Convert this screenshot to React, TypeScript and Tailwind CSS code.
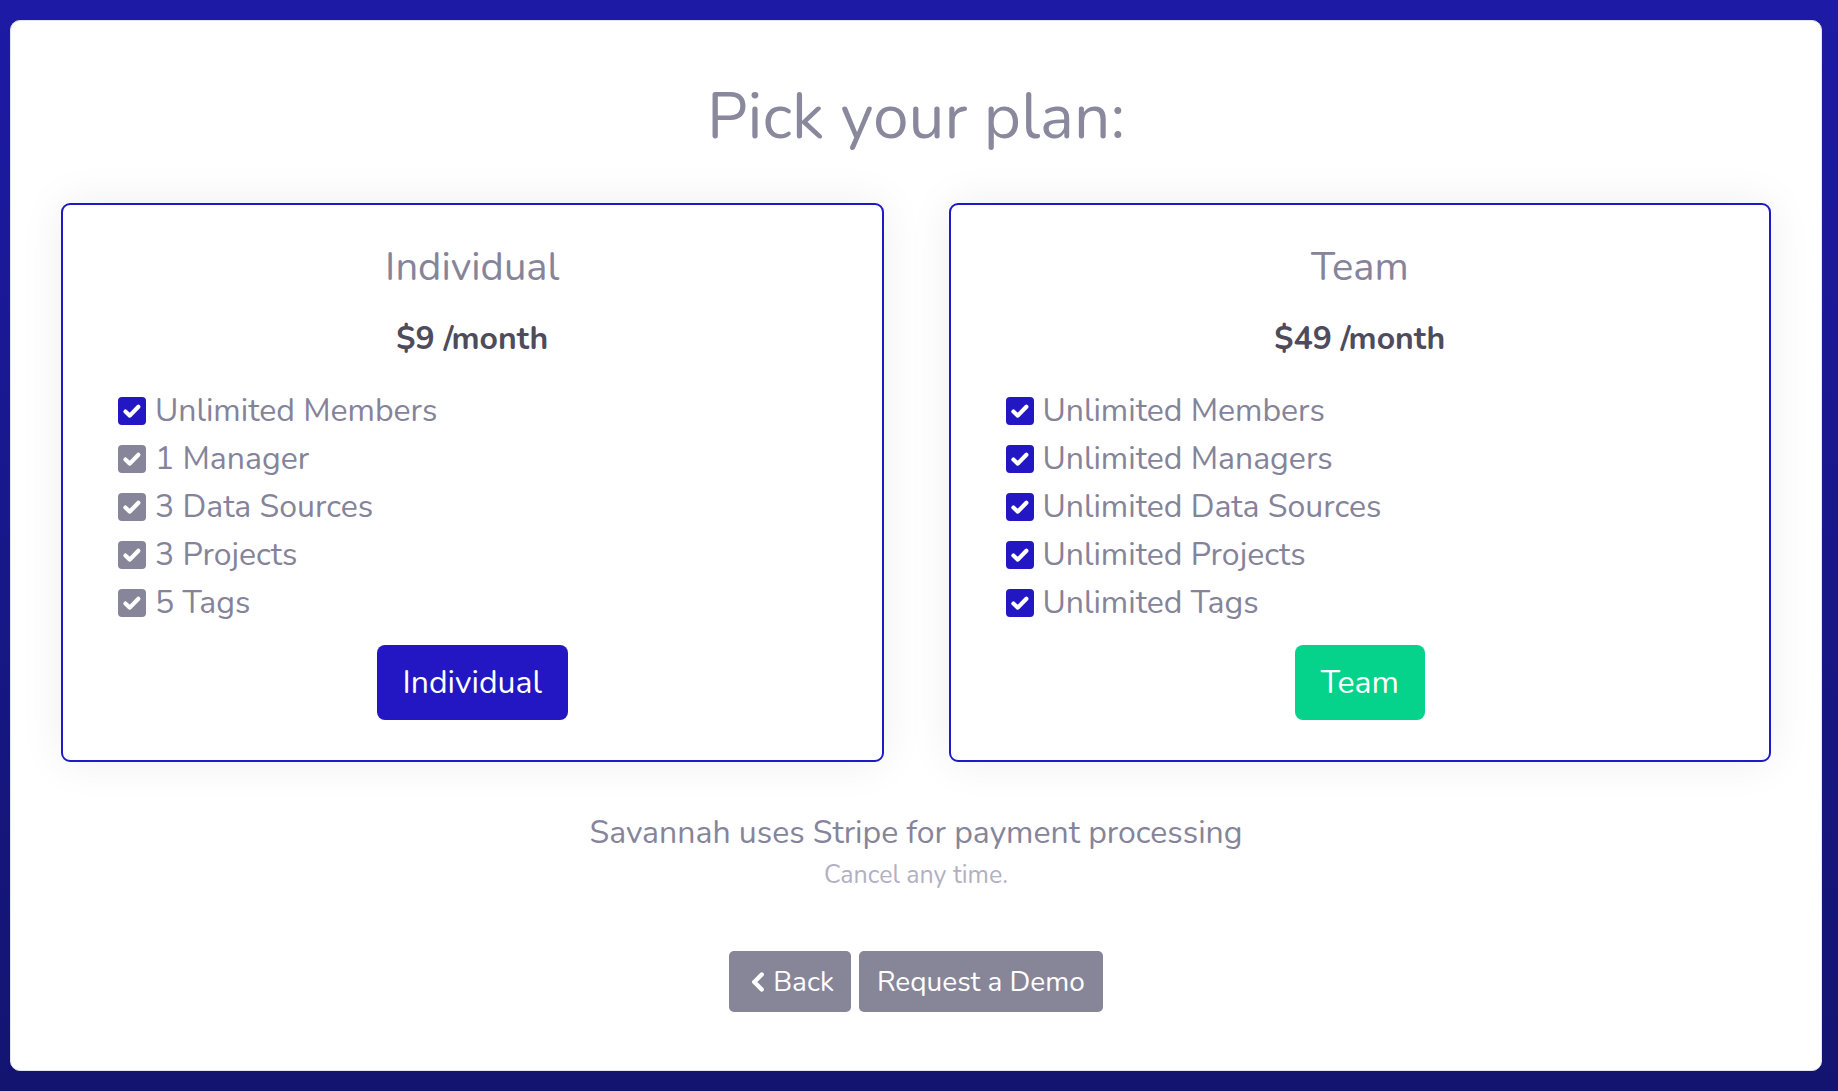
import React from "react";
import { ChevronLeft } from "lucide-react";

const font = { fontFamily: "Nunito, Lato, 'Open Sans', sans-serif" };

function Check({ color }: { color: "blue" | "gray" }) {
  return (
    <span
      className={
        "flex h-[28px] w-[28px] shrink-0 items-center justify-center rounded-[4px] " +
        (color === "blue" ? "bg-[#2317c3]" : "bg-[#878599]")
      }
    >
      <svg width="22" height="22" viewBox="0 0 20 20" fill="none">
        <path d="M4 10.5 L8 14.2 L15.8 6.2" stroke="white" strokeWidth="3.8" strokeLinecap="round" strokeLinejoin="round" />
      </svg>
    </span>
  );
}

type Feature = { text: string; color: "blue" | "gray" };

function PlanCard({
  title,
  price,
  features,
  button,
  buttonClass,
}: {
  title: string;
  price: string;
  features: Feature[];
  button: string;
  buttonClass: string;
}) {
  return (
    <div className="flex flex-1 flex-col rounded-[9px] border-2 border-[#1f19c6] bg-white pb-[40px] pt-[32px] shadow-[0_0_45px_rgba(0,0,0,0.07)]">
      <div className="text-center text-[40px] leading-[60px] text-[#86849a]">{title}</div>
      <div className="mt-[22px] text-center text-[32px] font-bold leading-[40px] text-[#4d4b5c]">{price}</div>
      <div className="mt-[38px] flex flex-col gap-[20px] pl-[55px]">
        {features.map((f) => (
          <div key={f.text} className="flex items-center gap-[9px]">
            <Check color={f.color} />
            <span className="text-[32px] leading-[28px] text-[#85839a]">{f.text}</span>
          </div>
        ))}
      </div>
      <div className="mt-[28px] flex justify-center">
        <button className={"h-[75px] rounded-[8px] px-[26px] text-[32px] text-white " + buttonClass}>{button}</button>
      </div>
    </div>
  );
}

export default function App() {
  return (
    <div
      className="min-h-screen w-full bg-gradient-to-b from-[#1d1aa5] to-[#131470] pb-[20px] pl-[10px] pr-[16px] pt-[20px]"
      style={font}
    >
      <div className="flex h-[1051px] flex-col items-center rounded-[10px] border border-[#e2e2f0] bg-white px-[50px]">
        <h1 className="mt-[60px] text-[64px] leading-[72px] text-[#8a889c]">Pick your plan:</h1>
        <div className="mt-[50px] flex w-full gap-[65px]">
          <PlanCard
            title="Individual"
            price="$9 /month"
            features={[
              { text: "Unlimited Members", color: "blue" },
              { text: "1 Manager", color: "gray" },
              { text: "3 Data Sources", color: "gray" },
              { text: "3 Projects", color: "gray" },
              { text: "5 Tags", color: "gray" },
            ]}
            button="Individual"
            buttonClass="bg-[#2317c3]"
          />
          <PlanCard
            title="Team"
            price="$49 /month"
            features={[
              { text: "Unlimited Members", color: "blue" },
              { text: "Unlimited Managers", color: "blue" },
              { text: "Unlimited Data Sources", color: "blue" },
              { text: "Unlimited Projects", color: "blue" },
              { text: "Unlimited Tags", color: "blue" },
            ]}
            button="Team"
            buttonClass="bg-[#05d38b]"
          />
        </div>
        <div className="mt-[50px] text-[32px] leading-[42px] text-[#86849a]">Savannah uses Stripe for payment processing</div>
        <div className="mt-[4px] text-[25px] leading-[34px] text-[#b2b0c2]">Cancel any time.</div>
        <div className="mt-[59px] flex gap-[8px]">
          <button className="flex h-[61px] items-center rounded-[5px] bg-[#878699] pl-[18px] pr-[17px] text-[28px] text-white">
            <ChevronLeft size={30} strokeWidth={3.5} className="-ml-[4px] mr-[0px]" />
            Back
          </button>
          <button className="h-[61px] rounded-[5px] bg-[#878699] px-[18px] text-[28px] text-white">Request a Demo</button>
        </div>
      </div>
    </div>
  );
}
